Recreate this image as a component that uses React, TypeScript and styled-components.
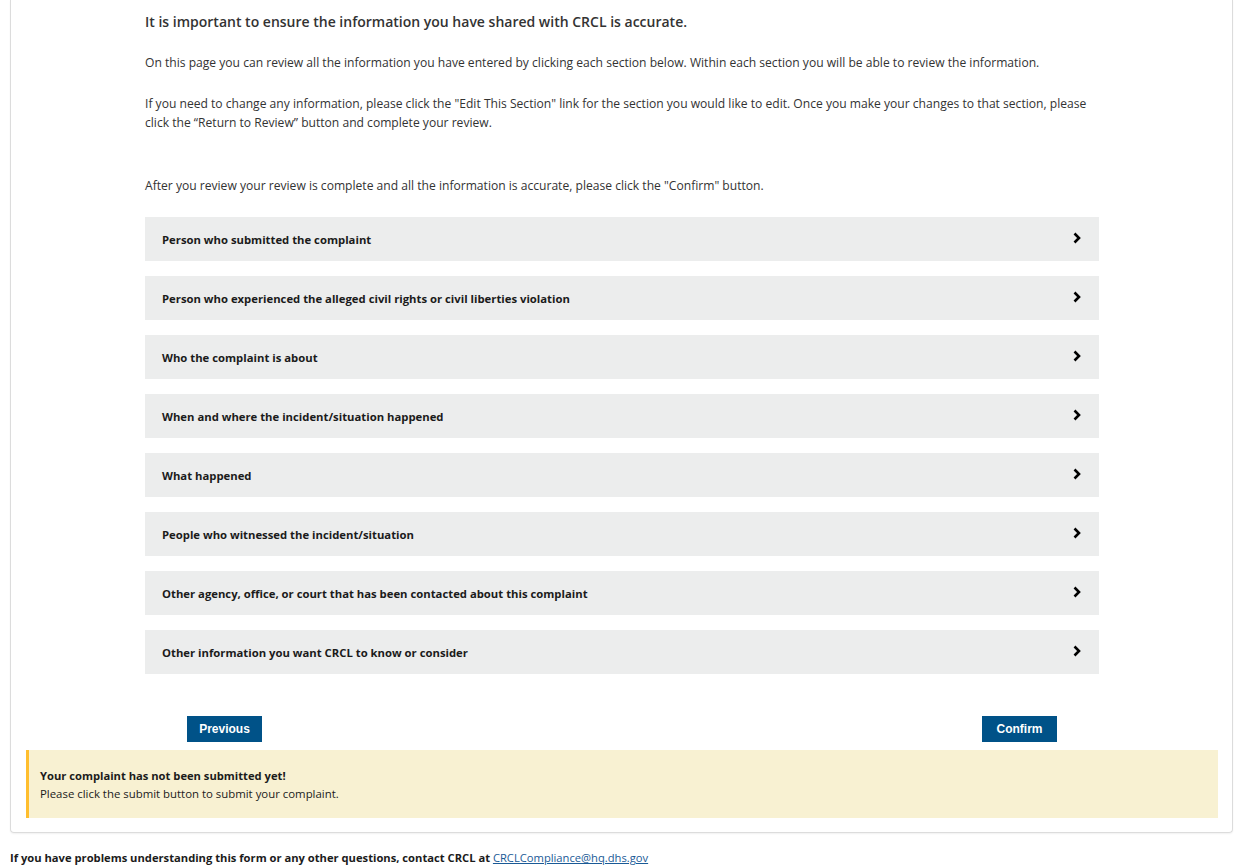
import React from 'react';
import styled, { createGlobalStyle } from 'styled-components';

const GlobalStyle = createGlobalStyle`
  html, body {
    margin: 0;
    padding: 0;
    background: #ffffff;
    font-family: "Open Sans", "Noto Sans", Arial, sans-serif;
    color: #1b1b1b;
  }
`;

const Page = styled.div`
  display: flex;
  flex-direction: column;
  min-height: 867px;
`;

const Card = styled.div`
  margin: 0 5px 0 10px;
  border: 1px solid #dcdcdc;
  border-top: none;
  border-radius: 0 0 4px 4px;
  box-shadow: 0 1px 2px rgba(0, 0, 0, 0.06);
  padding: 0 14px 14px 15px;
`;

const Review = styled.div`
  width: 954px;
  margin: 0 auto;
  padding-top: 11px;
`;

const Heading = styled.h2`
  margin: 0;
  font-size: 14px;
  line-height: 22px;
  font-weight: 600;
  color: #333333;
`;

const Para = styled.p<{ $gap: number }>`
  margin: ${(p) => p.$gap}px 0 0;
  font-size: 12.1px;
  line-height: 19.5px;
  color: #333333;
`;

const Sections = styled.div`
  display: flex;
  flex-direction: column;
  gap: 15px;
  margin-top: 22px;
`;

const SectionRow = styled.button`
  display: flex;
  align-items: center;
  justify-content: space-between;
  height: 44px;
  width: 100%;
  padding: 0 17px 0 17px;
  border: none;
  background: #eceded;
  font-family: "Open Sans", "Noto Sans", Arial, sans-serif;
  font-size: 11.3px;
  font-weight: 700;
  color: #1b1b1b;
  cursor: pointer;
  text-align: left;
`;

const Chevron = styled.svg`
  width: 10px;
  height: 12px;
  margin-top: -3px;
  flex-shrink: 0;
`;

const ButtonBar = styled.div`
  display: flex;
  justify-content: space-between;
  padding: 42px 42px 8px;
`;

const NavButton = styled.button`
  width: 75px;
  height: 26px;
  border: none;
  border-radius: 0;
  background: #005288;
  color: #ffffff;
  font-family: "Liberation Sans", Arial, sans-serif;
  font-size: 12px;
  font-weight: 700;
  cursor: pointer;
`;

const Alert = styled.div`
  background: #f8f1d2;
  border-left: 3px solid #ffbe2e;
  padding: 16px 11px 15px;
`;

const AlertTitle = styled.div`
  font-size: 11.2px;
  font-weight: 700;
  line-height: 19px;
  color: #1b1b1b;
`;

const AlertText = styled.div`
  font-size: 11.4px;
  line-height: 18px;
  color: #1b1b1b;
`;

const Footer = styled.div`
  margin: 16px 0 0 10px;
  font-size: 11.2px;
  font-weight: 700;
  line-height: 18px;
  color: #1b1b1b;
  a {
    font-weight: 400;
    color: #1a5a96;
    text-decoration: underline;
  }
`;

const BottomStrip = styled.div`
  margin-top: auto;
  height: 2px;
  background: #eeeeee;
`;

const sections = [
  'Person who submitted the complaint',
  'Person who experienced the alleged civil rights or civil liberties violation',
  'Who the complaint is about',
  'When and where the incident/situation happened',
  'What happened',
  'People who witnessed the incident/situation',
  'Other agency, office, or court that has been contacted about this complaint',
  'Other information you want CRCL to know or consider',
];

const App: React.FC = () => {
  return (
    <>
      <GlobalStyle />
      <Page>
        <Card>
          <Review>
            <Heading>It is important to ensure the information you have shared with CRCL is accurate.</Heading>
            <Para $gap={20}>
              On this page you can review all the information you have entered by clicking each section below. Within each section you will be able to review the information.
            </Para>
            <Para $gap={21}>
              If you need to change any information, please click the "Edit This Section" link for the section you would like to edit. Once you make your changes to that section, please click the “Return to Review” button and complete your review.
            </Para>
            <Para $gap={43}>
              After you review your review is complete and all the information is accurate, please click the "Confirm" button.
            </Para>
            <Sections>
              {sections.map((s) => (
                <SectionRow key={s} type="button">
                  <span>{s}</span>
                  <Chevron viewBox="0 0 10 12">
                    <polyline points="2.5,1.5 7,6 2.5,10.5" fill="none" stroke="#000" strokeWidth="2.6" />
                  </Chevron>
                </SectionRow>
              ))}
            </Sections>
            <ButtonBar>
              <NavButton type="button">Previous</NavButton>
              <NavButton type="button">Confirm</NavButton>
            </ButtonBar>
          </Review>
          <Alert>
            <AlertTitle>Your complaint has not been submitted yet!</AlertTitle>
            <AlertText>Please click the submit button to submit your complaint.</AlertText>
          </Alert>
        </Card>
        <Footer>
          If you have problems understanding this form or any other questions, contact CRCL at{' '}
          <a href="#">CRCLCompliance@hq.dhs.gov</a>
        </Footer>
        <BottomStrip />
      </Page>
    </>
  );
};

export default App;
